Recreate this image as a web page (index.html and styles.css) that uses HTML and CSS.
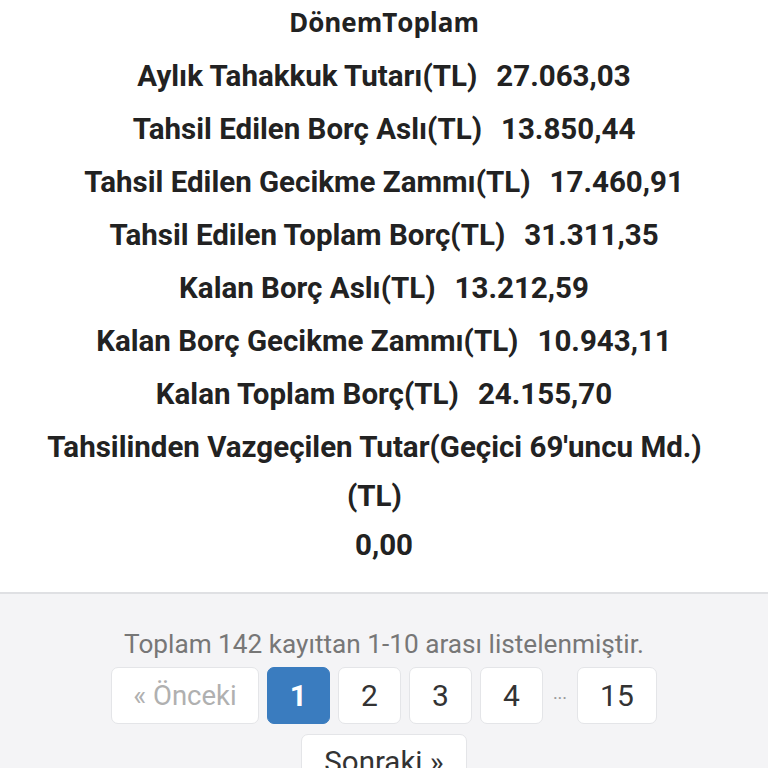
FILE: index.html
```html
<!DOCTYPE html>
<html lang="tr">
<head>
<meta charset="utf-8">
<link rel="stylesheet" href="styles.css">
</head>
<body>
<div class="panel">
  <div class="panel-body">
    <h3 class="title">DönemToplam</h3>
    <div class="row"><span class="label">Aylık Tahakkuk Tutarı(TL)</span><span class="value">27.063,03</span></div>
    <div class="row"><span class="label">Tahsil Edilen Borç Aslı(TL)</span><span class="value">13.850,44</span></div>
    <div class="row"><span class="label">Tahsil Edilen Gecikme Zammı(TL)</span><span class="value">17.460,91</span></div>
    <div class="row"><span class="label">Tahsil Edilen Toplam Borç(TL)</span><span class="value">31.311,35</span></div>
    <div class="row"><span class="label">Kalan Borç Aslı(TL)</span><span class="value">13.212,59</span></div>
    <div class="row"><span class="label">Kalan Borç Gecikme Zammı(TL)</span><span class="value">10.943,11</span></div>
    <div class="row"><span class="label">Kalan Toplam Borç(TL)</span><span class="value">24.155,70</span></div>
    <div class="row"><span class="label">Tahsilinden Vazgeçilen Tutar(Geçici 69'uncu Md.) (TL)</span><span class="value">0,00</span></div>
  </div>
  <div class="panel-footer">
    <p class="summary">Toplam 142 kayıttan 1-10 arası listelenmiştir.</p>
    <ul class="pagination">
      <li class="page disabled wide">« Önceki</li>
      <li class="page active">1</li>
      <li class="page">2</li>
      <li class="page">3</li>
      <li class="page">4</li>
      <li class="dots">···</li>
      <li class="page">15</li>
      <li class="page wide next">Sonraki »</li>
    </ul>
  </div>
</div>
</body>
</html>
```
FILE: styles.css
```css
html, body {
  margin: 0;
  padding: 0;
  background: #ffffff;
}
body {
  font-family: Roboto, "Liberation Sans", sans-serif;
  color: #222222;
}
.panel-body {
  padding: 0 0 18px;
  text-align: center;
}
.title {
  font-family: "Open Sans", Roboto, sans-serif;
  font-weight: 700;
  font-size: 26px;
  line-height: 45px;
  margin: 0 0 7px;
  color: #222;
}
.row {
  display: flex;
  flex-wrap: wrap;
  justify-content: center;
  font-weight: 700;
  font-size: 29.5px;
  line-height: 49px;
  margin-bottom: 4px;
  padding: 0 25px;
}
.label {
  margin-right: 19px;
}
.panel-footer {
  background: #f4f4f6;
  border-top: 2px solid #dfe0e3;
  padding: 30px 0 0;
  text-align: center;
  min-height: 200px;
}
.summary {
  margin: 0;
  font-size: 26.2px;
  line-height: 40px;
  color: #777777;
}
.pagination {
  list-style: none;
  margin: 3px 0 0;
  padding: 0 100px;
  display: flex;
  flex-wrap: wrap;
  justify-content: center;
  gap: 10px 8px;
}
.page {
  box-sizing: border-box;
  height: 57px;
  min-width: 63px;
  padding: 0 22px;
  background: #ffffff;
  border: 1px solid #e4e5e8;
  border-radius: 7px;
  font-size: 30px;
  line-height: 55px;
  color: #333;
  text-align: center;
}
.page.wide {
  padding: 0 21px;
  font-size: 27.5px;
}
.page.next {
  padding: 0 22px;
  font-size: 29.5px;
}
.page.disabled {
  color: #b0b0b0;
}
.page.active {
  background: #3a7cbf;
  border-color: #3a7cbf;
  color: #fff;
  font-weight: 700;
}
.dots {
  box-sizing: border-box;
  height: 57px;
  padding: 6px 2px 0;
  color: #999;
  font-size: 18px;
  line-height: 51px;
}
```
